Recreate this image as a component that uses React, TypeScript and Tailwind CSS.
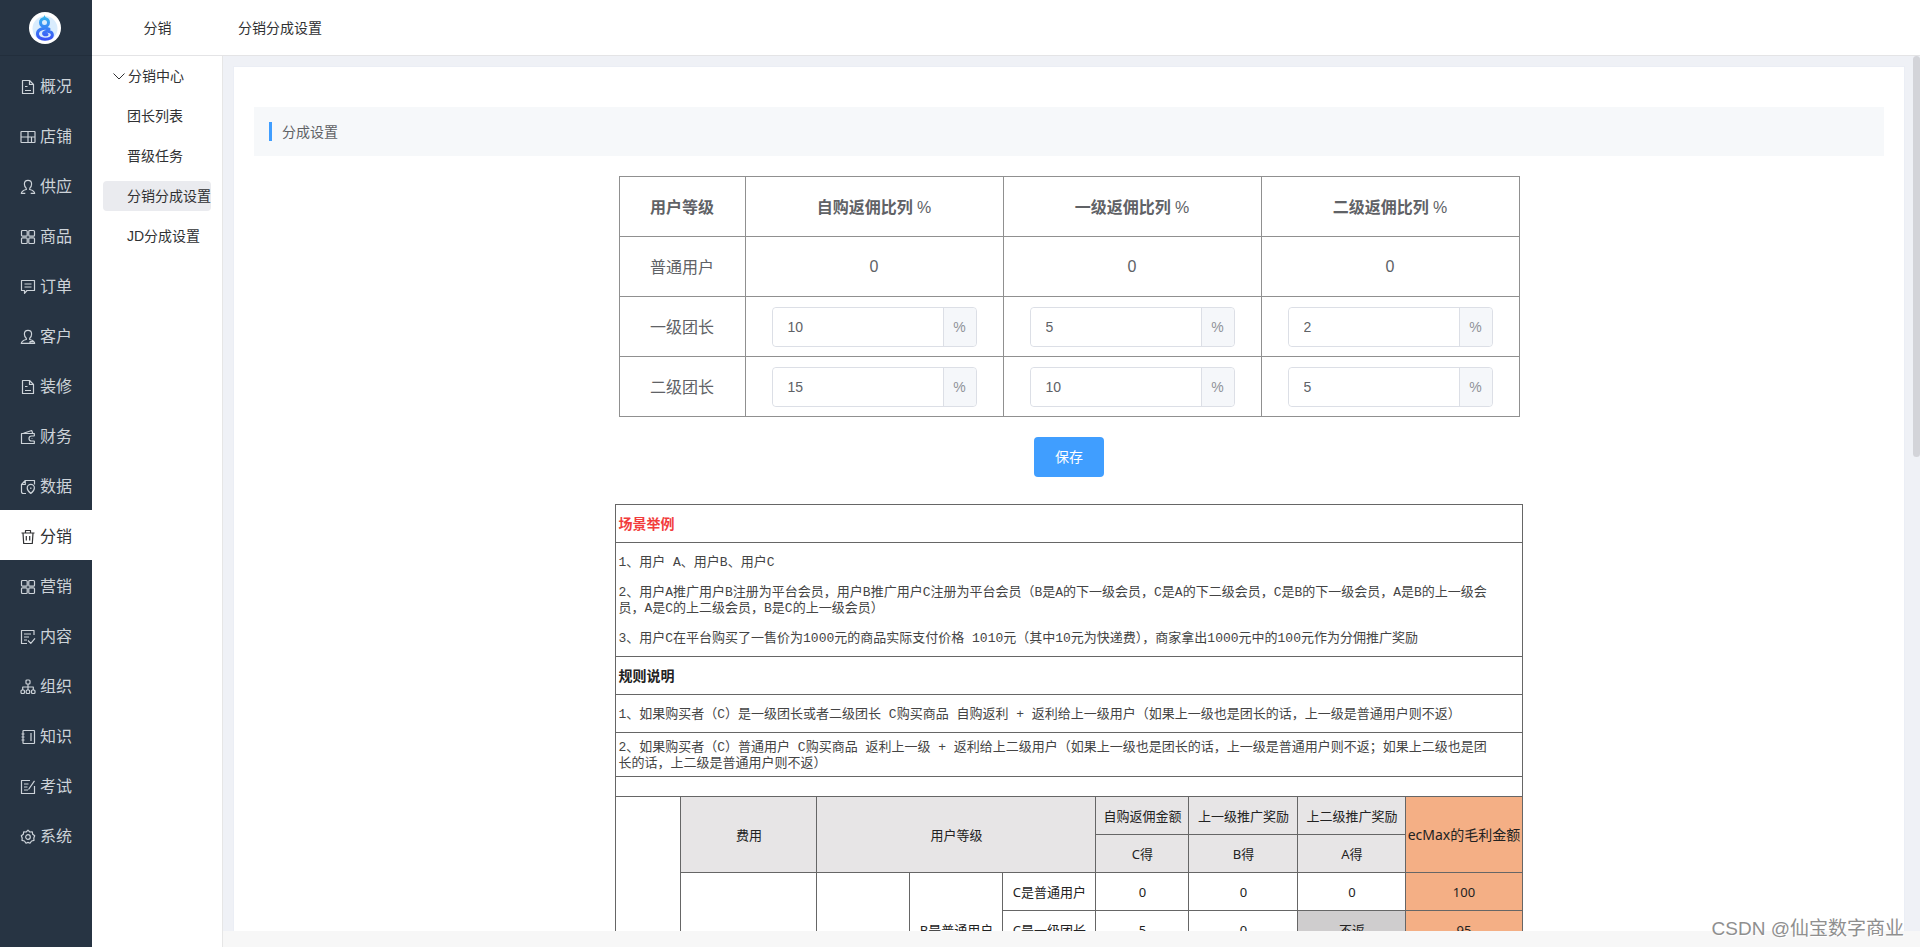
import { useState } from "react";
import type { ReactNode } from "react";

const DOC = (
  <>
    <path d="M9.5 1.5h-7v13h11v-9z" />
    <path d="M9.5 1.5v4h4M5 7.5h2.5M5 11.5h6" />
  </>
);
const GRID = (
  <>
    <rect x="1.5" y="1.5" width="5.7" height="5.7" rx="1" />
    <rect x="8.8" y="1.5" width="5.7" height="5.7" rx="1" />
    <rect x="1.5" y="8.8" width="5.7" height="5.7" rx="1" />
    <rect x="8.8" y="8.8" width="5.7" height="5.7" rx="1" />
  </>
);

const ICONS: Record<string, ReactNode> = {
  document: DOC,
  grid: GRID,
  person: (
    <path d="M6.3 9.2C4.9 8.2 4.4 6.6 4.4 5c0-2.2 1.5-3.7 3.600-3.700s3.600 1.500 3.600 3.700c0 1.600-.5 3.200-1.900 4.200M6.300 9.200v1.300c-2.400.6-4.700 1.300-5 3.900h4M9.700 9.200v1.300c2.400.6 4.700 1.300 5 3.900h-4" />
  ),
  shop: (
    <>
      <rect x="1" y="2.500" width="14" height="11" rx=".5" />
      <path d="M8 2.500v11M1 8h14M11.500 8v5.500" />
    </>
  ),
  chat: (
    <>
      <path d="M1.500 1.500h13v10H7l-2.500 2.800v-2.800h-3z" />
      <path d="M4.500 5h7M4.500 8h7" />
    </>
  ),
  customer: (
    <path d="M6.300 9.200C4.900 8.200 4.400 6.600 4.400 5c0-2.200 1.500-3.700 3.600-3.700s3.600 1.500 3.600 3.700c0 1.600-.5 3.200-1.900 4.200v1.300c2.400.6 4.700 1.300 5 3.900H1.300c.3-2.600 2.600-3.300 5-3.900zM10 14.300v-1.600h4" />
  ),
  wallet: (
    <>
      <path d="M14.300 7V4.500H1.500v10h12.800V12" />
      <path d="M3.500 4.300 11.700 1.500l1 2.800M14.500 7h-3a2.400 2.400 0 0 0 0 5h3M11.700 9.500h.6" />
    </>
  ),
  data: (
    <>
      <path d="M6 14.500H3.200a1.700 1.700 0 0 1-1.700-1.700V5.500l3.800-4h9.200v4M5.300 1.500v4H1.500" />
      <path d="M10.800 14.500c-2.300-1.800-3.600-3.700-3.600-5.500a3.600 3.600 0 0 1 7.200 0c0 1.800-1.300 3.700-3.600 5.500zM10.800 8.500v1.500" />
    </>
  ),
  trash: (
    <path d="M1.500 4h13M5.500 4V1.500h5V4M3 4l.7 10.500h8.600L13 4M6.300 7v4.500M9.700 7v4.500" />
  ),
  contentCheck: (
    <>
      <path d="M14 6V1.500H1.500v13H7" />
      <path d="M4 5h7M4 8h5M4 11h3M8 11.500l2.800 2.800 4.200-5" />
    </>
  ),
  org: (
    <>
      <rect x="6" y="1" width="4" height="4" rx="1" />
      <rect x="1" y="11" width="3.500" height="3.500" rx="1" />
      <rect x="6.200" y="11" width="3.500" height="3.500" rx="1" />
      <rect x="11.500" y="11" width="3.500" height="3.500" rx="1" />
      <path d="M8 5v6M2.700 11V8h10.600v3" />
    </>
  ),
  notebook: (
    <>
      <rect x="3" y="1.500" width="11.500" height="13" rx=".5" />
      <path d="M1.500 5H4.500M1.500 8H4.500M1.500 11H4.500M11 4v8" />
    </>
  ),
  exam: (
    <>
      <path d="M10 1.500H1.500v13h13V7" />
      <path d="M4 5h4.500M4 8h3.500M4 11h4M8.500 10.500 14.500 1.800" />
    </>
  ),
  gear: (
    <>
      <path d="M8 1.200 9.800 3l2.500-.1.400 2.400 2 1.500L13.800 9l.2 2.400-2.400.6L10 14.200 8 13.400l-2 .8L4.400 12 2 11.400 2.200 9l-.9-2.200 2-1.500.4-2.400L6.200 3z" />
      <circle cx="8" cy="8" r="2.300" />
    </>
  ),
};

const MENU = [
  { label: "概况", icon: "document" },
  { label: "店铺", icon: "shop" },
  { label: "供应", icon: "person" },
  { label: "商品", icon: "grid" },
  { label: "订单", icon: "chat" },
  { label: "客户", icon: "customer" },
  { label: "装修", icon: "document" },
  { label: "财务", icon: "wallet" },
  { label: "数据", icon: "data" },
  { label: "分销", icon: "trash" },
  { label: "营销", icon: "grid" },
  { label: "内容", icon: "contentCheck" },
  { label: "组织", icon: "org" },
  { label: "知识", icon: "notebook" },
  { label: "考试", icon: "exam" },
  { label: "系统", icon: "gear" },
];

const SUB_MENU = ["团长列表", "晋级任务", "分销分成设置", "JD分成设置"];

const COLUMNS = ["自购返佣比列", "一级返佣比列", "二级返佣比列"];

const LEVELS = [
  { name: "一级团长", values: ["10", "5", "2"] },
  { name: "二级团长", values: ["15", "10", "5"] },
];

const TD = "border border-[#909090] p-0";
const TD_NAME = "border border-[#909090] px-0 pt-[2px] pb-0";
const RULE = "border border-[#666] p-0";
const RULE_TEXT = "border border-[#666] px-[2px] pt-[2px] pb-0";
const HEAD = "border border-[#666] bg-[#e7e5e6] p-0 font-normal";
const ORANGE = "border border-[#666] bg-[#f4af85] p-0 font-normal";

function Icon({ name }: { name: string }) {
  return (
    <svg
      className="h-4 w-4 shrink-0"
      viewBox="0 0 16 16"
      fill="none"
      stroke="currentColor"
      strokeWidth="1.2"
      strokeLinejoin="round"
      aria-hidden
    >
      {ICONS[name]}
    </svg>
  );
}

function Logo() {
  return (
    <svg className="h-8 w-8" viewBox="0 0 32 32" fill="none" aria-hidden>
      <defs>
        <linearGradient id="logo" x1="16" y1="4" x2="16" y2="29" gradientUnits="userSpaceOnUse">
          <stop offset="0" stopColor="#35b8ee" />
          <stop offset=".55" stopColor="#3a7bf6" />
          <stop offset="1" stopColor="#3a4df5" />
        </linearGradient>
      </defs>
      <circle cx="16" cy="16" r="16" fill="#fff" />
      <circle cx="16" cy="16.500" r="12.500" fill="#d9ecfd" />
      <path d="m15.500 3 1.500 3.500h-3z" fill="#35b8ee" />
      <circle cx="15.500" cy="10.500" r="4" stroke="url(#logo)" strokeWidth="3" />
      <path
        d="M20 17.200c-4-1.800-11-.8-11.500 4-.4 4.300 3.500 6 7.500 6 4.500 0 7.800-1.700 7.300-5-.5-3.200-6.300-3.600-8.300-1.600-1.300 1.500.8 2.800 3 1.900"
        stroke="url(#logo)"
        strokeWidth="3"
        strokeLinecap="round"
      />
    </svg>
  );
}

function Sidebar() {
  return (
    <aside className="flex w-[92px] shrink-0 flex-col bg-[#273443]">
      <div className="flex h-14 shrink-0 items-center justify-center border-b border-[#222e3c] pr-[2px]">
        <Logo />
      </div>
      <nav className="mt-1">
        {MENU.map((m) => (
          <a
            key={m.label}
            href="#"
            className={`flex h-[50px] items-center justify-center gap-1 pt-[3px] text-base ${
              m.label === "分销" ? "bg-white text-[#303133]" : "text-[#cdd3d9]"
            }`}
          >
            <Icon name={m.icon} />
            {m.label}
          </a>
        ))}
      </nav>
    </aside>
  );
}

function SubMenu() {
  return (
    <nav className="w-[131px] shrink-0 border-r border-[#e6e6e6] bg-white px-[11px] pt-[5px] text-sm text-[#303133]">
      <button type="button" className="flex h-[30px] items-center gap-[2px] pl-[9px]">
        <svg
          className="h-[14px] w-[14px]"
          viewBox="0 0 14 14"
          fill="none"
          stroke="currentColor"
          strokeWidth="1"
          aria-hidden
        >
          <path d="m1.500 4.500 5.500 5.500 5.500-5.500" />
        </svg>
        分销中心
      </button>
      {SUB_MENU.map((s) => (
        <a
          key={s}
          href="#"
          className={`mt-[10px] flex h-[30px] items-center rounded-sm pl-6 whitespace-nowrap ${
            s === "分销分成设置" ? "bg-[#eaebef]" : ""
          }`}
        >
          {s}
        </a>
      ))}
    </nav>
  );
}

function PercentInput({ label, initial }: { label: string; initial: string }) {
  const [value, setValue] = useState(initial);
  return (
    <div className="mx-auto flex h-10 w-[205px] rounded border border-[#dcdfe6] text-sm">
      <input
        aria-label={label}
        value={value}
        onChange={(e) => setValue(e.target.value)}
        className="min-w-0 flex-1 rounded-l bg-white px-[15px] text-[#606266] outline-none"
      />
      <span className="flex w-[33px] items-center justify-center rounded-r border-l border-[#dcdfe6] bg-[#f5f7fa] text-[#909399]">
        %
      </span>
    </div>
  );
}

function RateTable() {
  return (
    <table className="mx-auto w-[901px] table-fixed border-collapse text-center text-base text-[#606266]">
      <colgroup>
        <col className="w-[126px]" />
        <col />
        <col />
        <col />
      </colgroup>
      <thead>
        <tr className="h-[60px]">
          <th className={TD_NAME}>用户等级</th>
          {COLUMNS.map((c) => (
            <th key={c} className={TD_NAME}>
              {c} <span className="font-normal">%</span>
            </th>
          ))}
        </tr>
      </thead>
      <tbody>
        <tr className="h-[60px]">
          <td className={TD_NAME}>普通用户</td>
          {COLUMNS.map((c) => (
            <td key={c} className={TD}>
              0
            </td>
          ))}
        </tr>
        {LEVELS.map((l) => (
          <tr key={l.name} className="h-[60px]">
            <td className={TD_NAME}>{l.name}</td>
            {l.values.map((v, i) => (
              <td key={COLUMNS[i]} className={TD}>
                <PercentInput label={`${l.name} ${COLUMNS[i]}`} initial={v} />
              </td>
            ))}
          </tr>
        ))}
      </tbody>
    </table>
  );
}

/** 场景举例与规则说明 */
function RuleTable() {
  return (
    <table className="mx-auto mt-[27px] w-[907px] table-fixed border-collapse text-[13px] leading-4 text-[#222] [font-family:'Noto_Sans','Noto_Sans_CJK_SC',sans-serif]">
      <colgroup>
        <col className="w-[65px]" />
        <col className="w-[136px]" />
        <col className="w-[93px]" />
        <col className="w-[93px]" />
        <col className="w-[93px]" />
        <col className="w-[93px]" />
        <col className="w-[109px]" />
        <col className="w-[108px]" />
        <col className="w-[116px]" />
      </colgroup>
      <tbody className="text-left text-[#444] [font-family:'Liberation_Mono','Noto_Sans_CJK_SC',monospace]">
        <tr className="h-[38px]">
          <th colSpan={9} className={`${RULE_TEXT} text-sm text-[#f23c3c]`}>
            场景举例
          </th>
        </tr>
        <tr className="h-[114px]">
          <td colSpan={9} className={RULE_TEXT}>
            <p>1、用户 A、用户B、用户C</p>
            <p className="my-[14px]">
              2、用户A推广用户B注册为平台会员，用户B推广用户C注册为平台会员（B是A的下一级会员，C是A的下二级会员，C是B的下一级会员，A是B的上一级会
              <br />
              员，A是C的上二级会员，B是C的上一级会员）
            </p>
            <p>
              3、用户C在平台购买了一售价为1000元的商品实际支付价格 1010元（其中10元为快递费），商家拿出1000元中的100元作为分佣推广奖励
            </p>
          </td>
        </tr>
        <tr className="h-[38px]">
          <th colSpan={9} className={`${RULE_TEXT} text-sm text-[#222]`}>
            规则说明
          </th>
        </tr>
        <tr className="h-[38px]">
          <td colSpan={9} className={RULE_TEXT}>
            1、如果购买者（C）是一级团长或者二级团长 C购买商品 自购返利 + 返利给上一级用户（如果上一级也是团长的话，上一级是普通用户则不返）
          </td>
        </tr>
        <tr className="h-[44px]">
          <td colSpan={9} className={RULE_TEXT}>
            2、如果购买者（C）普通用户 C购买商品 返利上一级 + 返利给上二级用户（如果上一级也是团长的话，上一级是普通用户则不返；如果上二级也是团
            <br />
            长的话，上二级是普通用户则不返）
          </td>
        </tr>
        <tr className="h-5">
          <td colSpan={9} className={RULE} />
        </tr>
      </tbody>
      <tbody className="text-center">
        <tr className="h-[38px]">
          <td rowSpan={5} className={RULE} />
          <th rowSpan={2} className={HEAD}>费用</th>
          <th rowSpan={2} colSpan={3} className={HEAD}>用户等级</th>
          <th className={HEAD}>自购返佣金额</th>
          <th className={HEAD}>上一级推广奖励</th>
          <th className={HEAD}>上二级推广奖励</th>
          <th rowSpan={2} className={`${ORANGE} text-sm leading-4 whitespace-nowrap`}>
            ecMax的毛利金额
          </th>
        </tr>
        <tr className="h-[38px]">
          <th className={HEAD}>C得</th>
          <th className={HEAD}>B得</th>
          <th className={HEAD}>A得</th>
        </tr>
        <tr className="h-[38px]">
          <td rowSpan={3} className={RULE} />
          <td rowSpan={3} className={RULE} />
          <td rowSpan={3} className={RULE}>B是普通用户</td>
          <td className={RULE}>C是普通用户</td>
          <td className={RULE}>0</td>
          <td className={RULE}>0</td>
          <td className={RULE}>0</td>
          <td className={ORANGE}>100</td>
        </tr>
        <tr className="h-[38px]">
          <td className={RULE}>C是一级团长</td>
          <td className={RULE}>5</td>
          <td className={RULE}>0</td>
          <td className={`${RULE} bg-[#cfcdce]`}>不返</td>
          <td className={ORANGE}>95</td>
        </tr>
        <tr className="h-[38px]">
          <td className={RULE} />
          <td className={RULE} />
          <td className={RULE} />
          <td className={RULE} />
          <td className={ORANGE} />
        </tr>
      </tbody>
    </table>
  );
}

export default function App() {
  return (
    <div className="relative flex h-screen overflow-hidden bg-white [font-family:'Liberation_Sans','Noto_Sans_CJK_SC',sans-serif]">
      <Sidebar />
      <div className="flex min-w-0 flex-1 flex-col">
        <header className="flex h-14 shrink-0 items-center border-b border-[#e4e4e6] text-sm text-[#303133]">
          <span className="w-[131px] text-center">分销</span>
          <h1 className="pl-[15px]">分销分成设置</h1>
        </header>
        <div className="flex min-h-0 flex-1">
          <SubMenu />
          <div className="relative flex min-w-0 flex-1 flex-col bg-[#eff1f6]">
            <main className="min-h-0 flex-1 overflow-y-auto pt-[10px] pr-[15px] pl-[10px] [scrollbar-width:none]">
              <section className="border border-[#ebeef5] bg-white px-5 pt-10 pb-5">
                <div className="mb-5 flex h-[49px] items-center bg-[#f6f8fa] pl-[15px] text-sm text-[#606266]">
                  <h2 className="flex h-[19px] items-center border-l-3 border-[#409eff] pl-[10px]">
                    分成设置
                  </h2>
                </div>
                <RateTable />
                <button
                  type="button"
                  className="mx-auto mt-5 block h-10 w-[70px] rounded bg-[#409eff] text-sm text-white"
                >
                  保存
                </button>
                <RuleTable />
              </section>
            </main>
            <footer className="h-4 shrink-0 bg-[#f7f7f7]" />
            <div className="absolute top-0 right-0 h-[401px] w-[7px] rounded-full bg-[#d3d4d9]" />
          </div>
        </div>
      </div>
      <div className="absolute right-4 bottom-[6px] text-[19px] leading-6 text-[#8f8f8f] [text-shadow:1px_1px_0_#fff]">
        CSDN @仙宝数字商业
      </div>
    </div>
  );
}
